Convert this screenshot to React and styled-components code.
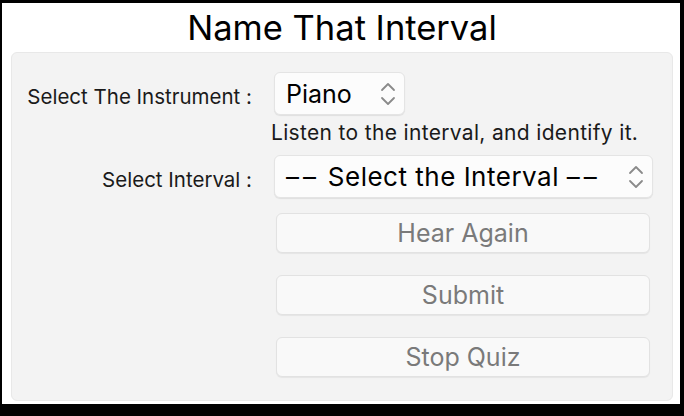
import React from "react";
import styled, { createGlobalStyle } from "styled-components";

const GlobalStyle = createGlobalStyle`
  html, body {
    margin: 0;
    padding: 0;
    background: #ffffff;
  }
  body {
    font-family: Inter, "Liberation Sans", Arial, sans-serif;
  }
`;

const Frame = styled.div`
  width: 684px;
  height: 416px;
  box-sizing: border-box;
  border-style: solid;
  border-color: #000000;
  border-width: 3px 4px 12px 2px;
  background: #ffffff;
  display: flex;
  flex-direction: column;
  padding: 0 7px 3px 9px;
`;

const Title = styled.h1`
  margin: 0;
  height: 49px;
  display: flex;
  align-items: center;
  justify-content: center;
  font-size: 34.5px;
  font-weight: 400;
  color: #000000;
`;

const Panel = styled.div`
  flex: 1;
  background: #f3f3f3;
  border: 1px solid #e8e8e8;
  border-radius: 6px;
  display: grid;
  grid-template-columns: 240px 1fr;
  column-gap: 22px;
  align-content: start;
  padding: 19px 20px 0 0;
`;

const Label = styled.label`
  justify-self: end;
  align-self: center;
  margin-top: ${(p) => p.$top || 0}px;
  font-size: 20.5px;
  line-height: 24px;
  color: #1a1a1a;
`;

const Cell = styled.div`
  grid-column: 2;
  margin-top: ${(p) => p.$top || 0}px;
`;

const SelectBox = styled.div`
  display: flex;
  align-items: center;
  justify-content: space-between;
  box-sizing: border-box;
  width: ${(p) => (p.$wide ? "379px" : "131px")};
  height: 43px;
  padding: 0 7px 0 11px;
  background: #fcfcfc;
  border: 1px solid #e4e4e4;
  border-radius: 6px;
  box-shadow: 0 1px 1px rgba(0, 0, 0, 0.08);
  font-size: ${(p) => (p.$wide ? "26px" : "25px")};
  letter-spacing: ${(p) => (p.$wide ? "0.5px" : "0")};
  color: #000000;
`;

const Dashes = styled.span`
  letter-spacing: 4px;
`;

const Hint = styled.div`
  grid-column: 2;
  margin: 6px 0 0 -3px;
  font-size: 21px;
  line-height: 24px;
  letter-spacing: 0.33px;
  color: #1a1a1a;
`;

const Button = styled.button`
  display: block;
  box-sizing: border-box;
  width: 374px;
  height: 40px;
  margin-left: 2px;
  background: #f9f9f9;
  border: 1px solid #e2e2e2;
  border-radius: 6px;
  box-shadow: 0 1px 1px rgba(0, 0, 0, 0.06);
  font-family: inherit;
  font-size: 25px;
  color: #7a7a7a;
  padding: 0;
`;

const Chevrons = () => (
  <svg width="18" height="30" viewBox="0 0 18 30" fill="none">
    <path d="M3 11 L9 5 L15 11" stroke="#8a8a8a" strokeWidth="1.8" strokeLinecap="round" strokeLinejoin="round" />
    <path d="M3 19 L9 25 L15 19" stroke="#8a8a8a" strokeWidth="1.8" strokeLinecap="round" strokeLinejoin="round" />
  </svg>
);

const App = () => {
  return (
    <>
      <GlobalStyle />
      <Frame>
        <Title>Name That Interval</Title>
        <Panel>
          <Label $top={6}>Select The Instrument :</Label>
          <Cell>
            <SelectBox>
              <span>Piano</span>
              <Chevrons />
            </SelectBox>
          </Cell>
          <Hint>Listen to the interval, and identify it.</Hint>
          <Label $top={16}>Select Interval :</Label>
          <Cell $top={10}>
            <SelectBox $wide>
              <span>
                <Dashes>––</Dashes> Select the Interval <Dashes>––</Dashes>
              </span>
              <Chevrons />
            </SelectBox>
          </Cell>
          <Cell $top={15}>
            <Button>Hear Again</Button>
          </Cell>
          <Cell $top={22}>
            <Button>Submit</Button>
          </Cell>
          <Cell $top={22}>
            <Button>Stop Quiz</Button>
          </Cell>
        </Panel>
      </Frame>
    </>
  );
};

export default App;
